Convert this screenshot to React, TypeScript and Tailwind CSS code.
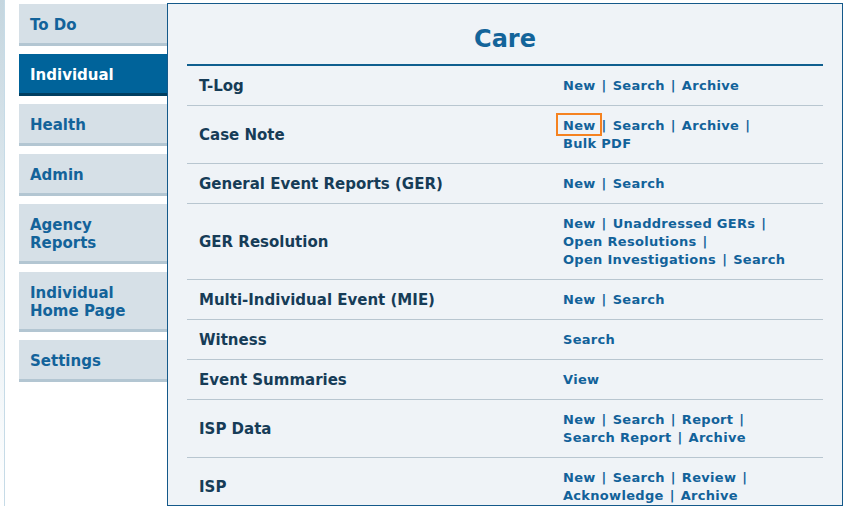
import React from "react";

type Row = { label: string; lines: string[][] };

const rows: Row[] = [
  { label: "T-Log", lines: [["New", "|", "Search", "|", "Archive"]] },
  { label: "Case Note", lines: [["*New", "|", "Search", "|", "Archive", "|"], ["Bulk PDF"]] },
  { label: "General Event Reports (GER)", lines: [["New", "|", "Search"]] },
  {
    label: "GER Resolution",
    lines: [
      ["New", "|", "Unaddressed GERs", "|"],
      ["Open Resolutions", "|"],
      ["Open Investigations", "|", "Search"],
    ],
  },
  { label: "Multi-Individual Event (MIE)", lines: [["New", "|", "Search"]] },
  { label: "Witness", lines: [["Search"]] },
  { label: "Event Summaries", lines: [["View"]] },
  {
    label: "ISP Data",
    lines: [
      ["New", "|", "Search", "|", "Report", "|"],
      ["Search Report", "|", "Archive"],
    ],
  },
  {
    label: "ISP",
    lines: [
      ["New", "|", "Search", "|", "Review", "|"],
      ["Acknowledge", "|", "Archive"],
    ],
  },
];

const nav: { label: string[]; active?: boolean }[] = [
  { label: ["To Do"] },
  { label: ["Individual"], active: true },
  { label: ["Health"] },
  { label: ["Admin"] },
  { label: ["Agency", "Reports"] },
  { label: ["Individual", "Home Page"] },
  { label: ["Settings"] },
];

function Token({ t }: { t: string }) {
  if (t === "|") return <span className="mx-[6px]">|</span>;
  if (t.startsWith("*")) {
    return (
      <span className="relative inline-block">
        {t.slice(1)}
        <span className="absolute -left-[7px] -right-[6px] -top-[4px] -bottom-[1px] border-2 border-[#f58220]" />
      </span>
    );
  }
  return <span>{t}</span>;
}

export default function App() {
  return (
    <div className="flex w-[846px] h-[506px] overflow-hidden bg-white font-['DejaVu_Sans','Verdana',sans-serif]">
      <div className="w-[5px] shrink-0 bg-gradient-to-b from-[#c5d6df] via-[#e4edf2] to-white border-r border-[#c6dbe7]" />
      <div className="w-[148px] shrink-0 ml-[14px] pt-[4px] flex flex-col gap-[8px]">
        {nav.map((n, i) => (
          <div
            key={i}
            className={
              n.active
                ? "bg-[#00639a] border-b-[3px] border-[#003f61] text-white pl-[11px] pt-[12px] pb-[9px] text-[15px] leading-[18px] font-bold"
                : "bg-[#d6e0e7] border-b-[3px] border-[#b3c6d2] text-[#13639a] pl-[11px] pt-[12px] pb-[9px] text-[15px] leading-[18px] font-bold"
            }
          >
            {n.label.map((l, j) => (
              <div key={j}>{l}</div>
            ))}
          </div>
        ))}
      </div>
      <div className="w-[676px] shrink-0 mt-[3px] border border-[#14598a] bg-[#eff3f7] px-[19px] pt-[21px]">
        <div className="text-center text-[24px] leading-[28px] font-bold text-[#13649a] mb-[11px]">Care</div>
        <div className="h-[2px] bg-[#0f5f8f]" />
        {rows.map((r, i) => (
          <div key={i} className="flex border-b border-[#b8c6d0]">
            <div className="w-[376px] shrink-0 pl-[12px] flex items-center text-[15px] leading-[18px] font-bold text-[#163c57]">
              {r.label}
            </div>
            <div className="pt-[11px] pb-[10px] text-[13px] leading-[18px] font-bold tracking-[0.3px] text-[#12629a]">
              {r.lines.map((line, j) => (
                <div key={j} className="whitespace-nowrap">
                  {line.map((t, k) => (
                    <Token key={k} t={t} />
                  ))}
                </div>
              ))}
            </div>
          </div>
        ))}
      </div>
    </div>
  );
}
